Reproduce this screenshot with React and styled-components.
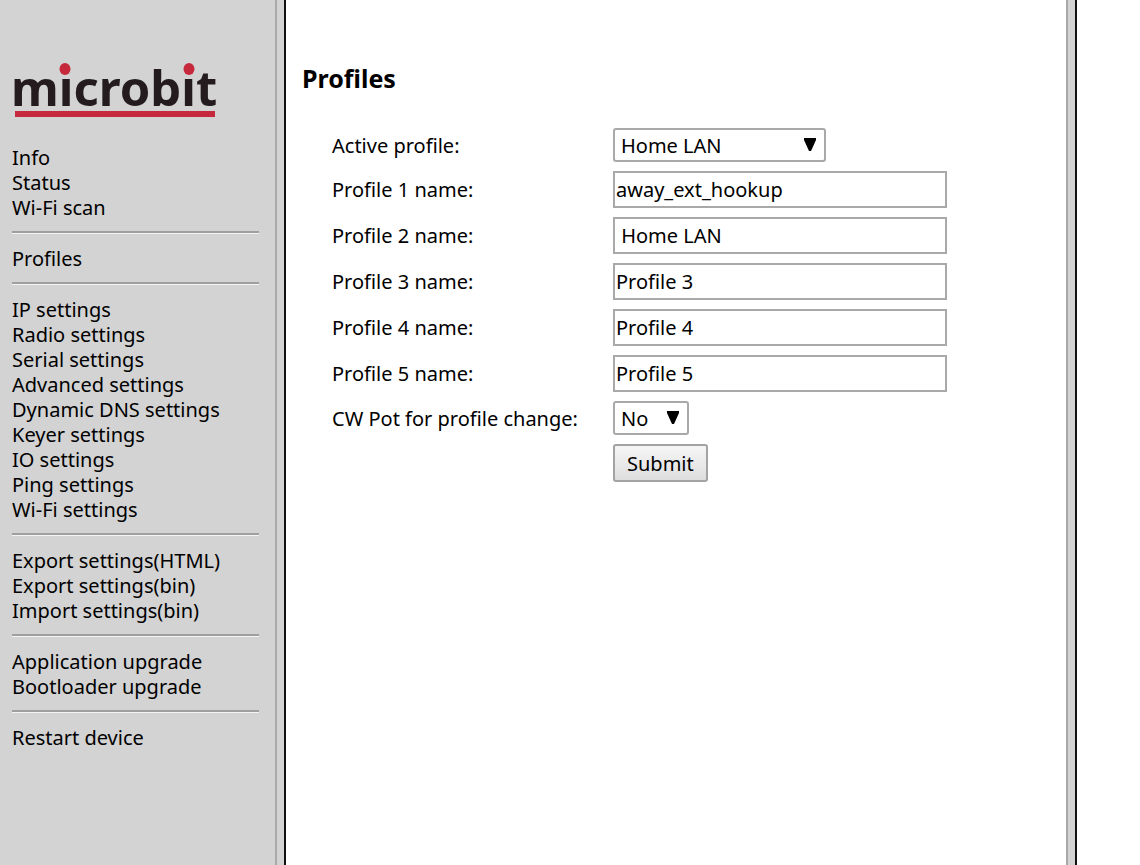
import React, { useState } from 'react'
import styled, { createGlobalStyle } from 'styled-components'

const menu = [
    ["Info", "Status", "Wi-Fi scan"],
    ["Profiles"],
    ["IP settings", "Radio settings", "Serial settings", "Advanced settings", "Dynamic DNS settings", "Keyer settings", "IO settings", "Ping settings", "Wi-Fi settings"],
    ["Export settings(HTML)", "Export settings(bin)", "Import settings(bin)"],
    ["Application upgrade", "Bootloader upgrade"],
    ["Restart device"]
]

// the red dots replace the black ones of both letters i
const Logo = () => {
    return (
        <LogoSvg viewBox='0 0 204 58' role='img' aria-label='microbit'>
            <text x='-1' y='45' fontSize='49' fontWeight='700' fill='#231b1d'>microbit</text>
            <rect x='48' y='4' width='10' height='12' fill='#d3d3d3' />
            <rect x='172' y='4' width='10' height='12' fill='#d3d3d3' />
            <ellipse cx='53' cy='8' rx='5.5' ry='6' fill='#c6283c' />
            <ellipse cx='177' cy='8' rx='5.5' ry='6' fill='#c6283c' />
            <rect x='3' y='50' width='200' height='6' fill='#c6283c' />
        </LogoSvg>
    )
}

const Dropdown = ({ id, value, options, onChange, wide }) => {
    return (
        <SelectBox $wide={wide}>
            <Select id={id} value={value} onChange={(e) => { onChange(e.target.value) }}>
                {options.map((currElem) => {
                    return <option key={currElem} value={currElem}>{currElem.trim()}</option>
                })}
            </Select>
            <Arrow viewBox='0 0 12 14' aria-hidden='true'>
                <path d='M0 0H12V2L7 13H5L0 2Z' />
            </Arrow>
        </SelectBox>
    )
}

const App = () => {

    const [names, setnames] = useState(["away_ext_hookup", " Home LAN", "Profile 3", "Profile 4", "Profile 5"]);
    const [active, setactive] = useState(" Home LAN");
    const [pot, setpot] = useState("No");

    const rename = (index, value) => {
        if (names[index] === active) {
            setactive(value);
        }
        setnames(names.map((currElem, i) => i === index ? value : currElem));
    }

    return (
        <>
            <GlobalStyle />
            <Frames>
                <Sidebar>
                    <Logo />
                    <nav>
                        {menu.map((group) => {
                            return <MenuGroup key={group[0]}>
                                {group.map((currElem) => {
                                    return <li key={currElem}><MenuLink href='#'>{currElem}</MenuLink></li>
                                })}
                            </MenuGroup>
                        })}
                    </nav>
                </Sidebar>
                <Divider />
                <Main>
                    <Title>Profiles</Title>
                    <Form onSubmit={(e) => { e.preventDefault() }}>
                        <label htmlFor='active'>Active profile:</label>
                        <Dropdown id='active' wide value={active} options={names} onChange={setactive} />
                        {names.map((currElem, i) => {
                            return <React.Fragment key={i}>
                                <label htmlFor={"name" + i}>Profile {i + 1} name:</label>
                                <Input id={"name" + i} type='text' value={currElem} onChange={(e) => { rename(i, e.target.value) }} />
                            </React.Fragment>
                        })}
                        <label htmlFor='pot'>CW Pot for profile change:</label>
                        <Dropdown id='pot' value={pot} options={["No", "Yes"]} onChange={setpot} />
                        <Submit type='submit'>Submit</Submit>
                    </Form>
                </Main>
                <Divider />
                <Blank />
            </Frames>
        </>
    )
}


const GlobalStyle = createGlobalStyle`
*{
    box-sizing: border-box;
}

body{
    margin: 0;
    background-color: #fff;
    color: #000;
    font-family: "Noto Sans", Verdana, sans-serif;
    font-size: 20px;
    line-height: 25px;
}

input, select, button{
    font: inherit;
    color: inherit;
}
`

const Frames = styled.div`
    display: flex;
    min-height: 100vh;
`

const Sidebar = styled.aside`
    flex: 0 0 275px;
    padding: 61px 16px 16px 12px;
    background-color: #d3d3d3;
`

const LogoSvg = styled.svg`
    display: block;
    width: 204px;
    height: 58px;
    margin-bottom: 26px;
    overflow: visible;
`

const MenuGroup = styled.ul`
    list-style: none;
    margin: 0;
    padding: 0;

    & + &{
        margin-top: 11px;
        padding-top: 13px;
        border-top: 2px solid #9f9f9f;
        box-shadow: inset 0 1px 0 #f4f4f4;
    }
`

const MenuLink = styled.a`
    display: block;
    color: #000;
    text-decoration: none;

    &:hover{
        text-decoration: underline;
    }
`

const Divider = styled.div`
    flex: 0 0 11px;
    background-color: #d3d3d3;
    border-left: 2px solid #a9a9a9;
    border-right: 2px solid #111;
`

const Main = styled.main`
    flex: 1;
    padding: 61px 16px 16px;
`

const Title = styled.h1`
    margin: 0;
    font-size: 25px;
    font-weight: 700;
    line-height: 34px;
`

const Form = styled.form`
    display: grid;
    grid-template-columns: 281px 334px;
    row-gap: 9px;
    align-items: center;
    justify-items: start;
    padding: 33px 0 0 30px;
`

const SelectBox = styled.div`
    position: relative;
    width: ${(props) => props.$wide ? "213px" : "76px"};
`

const Select = styled.select`
    display: block;
    appearance: none;
    width: 100%;
    height: 34px;
    padding: 0 28px 0 6px;
    border: 2px solid #a9a9a9;
    border-radius: 3px;
    background-color: #fff;
`

const Arrow = styled.svg`
    position: absolute;
    top: 10px;
    right: 10px;
    width: 12px;
    height: 14px;
    pointer-events: none;
`

const Input = styled.input`
    width: 100%;
    height: 37px;
    padding: 0 1px;
    border: 2px solid #a9a9a9;
    border-radius: 0;
    background-color: #fff;
`

const Submit = styled.button`
    grid-column: 2;
    height: 38px;
    padding: 0 12px;
    border: 2px solid #a3a3a3;
    border-radius: 3px;
    background: linear-gradient(#f6f6f6, #dedede);
`

const Blank = styled.div`
    flex: 0 0 63px;
`

export default App
